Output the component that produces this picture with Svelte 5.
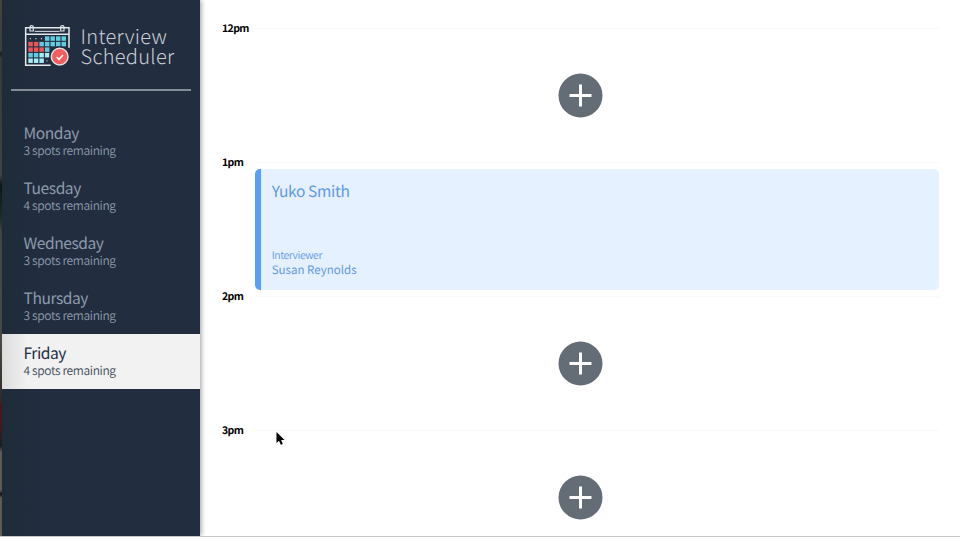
<script>
  const days = [
    { name: 'Monday', spots: 3 },
    { name: 'Tuesday', spots: 4 },
    { name: 'Wednesday', spots: 3 },
    { name: 'Thursday', spots: 3 },
    { name: 'Friday', spots: 4, selected: true }
  ];
  const slots = [
    { time: '12pm' },
    { time: '1pm', student: 'Yuko Smith', interviewer: 'Susan Reynolds' },
    { time: '2pm' },
    { time: '3pm' }
  ];
  const grid = ['...cccc', 'rrccccc', 'rrrc   ', 'ccll   ', 'lll.   '];
  const fills = { c: '#62cbe0', r: '#ef5558', l: '#a8edf5' };
  const cells = grid.flatMap((row, y) =>
    [...row].map((kind, x) => ({ kind, x: 85 + x * 16.6, y: 109 + y * 16.6 }))
  ).filter((c) => c.kind !== ' ');
</script>

<main>
  <div class="edge"></div>
  <aside>
    <header>
      <svg class="logo" viewBox="72 72 141 132" aria-hidden="true">
        <g fill="none" stroke="#e3e8ec" stroke-width="4.5">
          <path d="M207 143V83H77V196H152" />
          <path d="M78 103H206" />
          <path d="M104 94H179" stroke-width="3" />
          <path d="M90 93V81Q90 77 95 77T100 81V93ZM182 93V81Q182 77 187 77T192 81V93Z" stroke-width="3.5" />
        </g>
        {#each cells as c}
          {#if c.kind === '.'}
            <circle cx={c.x + 6} cy={c.y + 7} r="2" fill="#dce4e9" />
          {:else}
            <rect x={c.x} y={c.y} width="13.4" height="13.4" fill={fills[c.kind]} />
          {/if}
        {/each}
        <circle cx="179" cy="170" r="31" fill="#222d3f" />
        <circle cx="179" cy="170" r="25" fill="#f25d5f" stroke="#e3dfe1" stroke-width="4.5" />
        <path d="M170 171L177 178L189 165" fill="none" stroke="#fff" stroke-width="4.5" />
      </svg>
      <h1>Interview<br />Scheduler</h1>
    </header>
    <hr />
    <nav>
      {#each days as day}
        <div class="day" class:selected={day.selected}>
          <h2>{day.name}</h2>
          <p>{day.spots} spots remaining</p>
        </div>
      {/each}
    </nav>
  </aside>
  <section>
    {#each slots as slot}
      <article>
        <div class="head"><h4>{slot.time}</h4><i></i></div>
        {#if slot.student}
          <div class="card">
            <h3>{slot.student}</h3>
            <div>
              <h5>Interviewer</h5>
              <h6>{slot.interviewer}</h6>
            </div>
          </div>
        {:else}
          <div class="add">
            <svg width="45" height="45" viewBox="0 0 45 45">
              <circle cx="22.5" cy="22.5" r="22" fill="#646d76" />
              <path d="M22.5 11.5V33.5M11.5 22.5H33.5" stroke="#fff" stroke-width="3" />
            </svg>
          </div>
        {/if}
      </article>
    {/each}
  </section>
  <svg class="cursor" width="12" height="17" viewBox="0 0 12 17">
    <path d="M1.5 1V12L4 9.7L5.8 13.8L7.8 12.9L6.1 9H9.5Z" fill="#000" stroke="#fff" stroke-width="1" paint-order="stroke" />
  </svg>
</main>

<style>
  :global(body) { background: #fff; overflow: hidden; }
  main {
    position: relative;
    display: flex;
    height: 537px;
    overflow: hidden;
    box-sizing: border-box;
    border-bottom: 1px solid #c6c6c6;
    font-family: "Noto Sans CJK SC", "Noto Sans CJK JP", sans-serif;
    text-rendering: geometricPrecision;
  }
  h1, h2, h3, h4, h5, h6, p { margin: 0; white-space: nowrap; }
  .edge {
    width: 2px;
    flex: none;
    background: linear-gradient(#4b4940 0, #45463f 50px, #1b2122 54px, #3c403d 58px, #454a4a 175px, #10191a 185px, #213127 218px, #4a4c48 232px, #515049 340px, #35302b 400px, #4c1b20 404px, #4c1b20 425px, #1a2224 446px, #6a645b 452px, #6a645b 490px, #111 494px, #6a645b 498px);
  }
  aside {
    width: 198px;
    flex: none;
    z-index: 1;
    background: linear-gradient(90deg, #1e2c39, #222d3f 40px);
    box-shadow: 1px 0 5px rgba(0, 0, 0, 0.4);
  }
  header { display: flex; height: 89px; padding-left: 22px; box-sizing: border-box; }
  .logo { width: 47px; height: 44px; margin-top: 24px; flex: none; }
  h1 {
    margin: 26px 0 0 9.5px;
    font-size: 20px;
    line-height: 19.5px;
    font-weight: 300;
    letter-spacing: 0.3px;
    color: #c9cfd5;
  }
  hr { margin: 0 9px; height: 2px; border: 0; background: #858d98; }
  nav { padding-top: 22px; }
  .day { height: 55.2px; padding: 9.7px 0 0 21.5px; box-sizing: border-box; color: #8d9bab; }
  h2 { font-size: 15.6px; line-height: 20px; font-weight: 400; letter-spacing: -0.45px; }
  .day p { font-size: 12px; line-height: 15px; font-weight: 350; letter-spacing: -0.35px; }
  .selected { background: linear-gradient(90deg, #dcdcdc, #f1f1f1 25px, #f2f2f2); color: #222d3f; }
  .selected p { color: #3d4c58; }
  section { flex: 1; padding: 18px 21px 0 22px; overflow: hidden; }
  article { height: 134px; }
  .head { display: flex; align-items: center; height: 21px; }
  .head h4 { width: 33px; font-size: 10.5px; line-height: 20px; font-weight: 700; letter-spacing: -0.6px; color: #000; padding-top: 1px; }
  .head i { flex: 1; height: 1px; background: #f9f9f9; }
  .add { display: flex; justify-content: center; padding: 34px 0 0; }
  .card {
    display: flex;
    flex-direction: column;
    justify-content: space-between;
    height: 121px;
    margin: -4px 0 0 33px;
    box-sizing: border-box;
    padding: 11px 11px 13px 10.7px;
    border-left: 6px solid #589ff8;
    border-radius: 5px;
    background: #e5f1fe;
    color: #6299e6;
  }
  h3 { font-size: 15.5px; line-height: 22px; font-weight: 400; letter-spacing: -0.35px; }
  h5 { font-size: 10.5px; line-height: 14px; font-weight: 350; letter-spacing: -0.45px; }
  h6 { font-size: 11.5px; line-height: 14px; font-weight: 400; letter-spacing: 0.02px; }
  .cursor { position: absolute; left: 275px; top: 431px; }
</style>
